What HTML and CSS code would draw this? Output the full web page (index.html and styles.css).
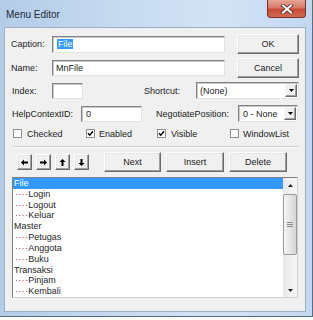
FILE: index.html
```html
<!DOCTYPE html>
<html>
<head>
<meta charset="utf-8">
<link rel="stylesheet" href="styles.css">
</head>
<body>
<div class="window">
  <div class="titlebar">
    <span class="title">Menu Editor</span>
    <div class="close">
      <svg width="14" height="10" viewBox="0 0 14 10"><path d="M3 1.5 L11 8.5 M11 1.5 L3 8.5" stroke="#4a3030" stroke-width="3.6" stroke-linecap="square"/><path d="M3 1.5 L11 8.5 M11 1.5 L3 8.5" stroke="#ffffff" stroke-width="2" stroke-linecap="square"/></svg>
    </div>
  </div>
  <div class="client">
    <div class="row r1">
      <span class="lbl l-cap">Caption:</span>
      <div class="tb tb-cap"><span class="sel">File</span></div>
      <div class="btn b-ok">OK</div>
    </div>
    <div class="row r2">
      <span class="lbl l-cap">Name:</span>
      <div class="tb tb-cap"><span class="txt">MnFile</span></div>
      <div class="btn b-ok">Cancel</div>
    </div>
    <div class="row r3">
      <span class="lbl l-idx">Index:</span>
      <div class="tb tb-idx"></div>
      <span class="lbl l-short">Shortcut:</span>
      <div class="combo cb-short"><span class="cb-text">(None)</span><span class="dd"><svg width="5" height="3" viewBox="0 0 5 3"><path d="M0 0 H5 L2.5 3 Z" fill="#000"/></svg></span></div>
    </div>
    <div class="row r4">
      <span class="lbl l-help">HelpContextID:</span>
      <div class="tb tb-help"><span class="txt">0</span></div>
      <span class="lbl l-neg">NegotiatePosition:</span>
      <div class="combo cb-neg"><span class="cb-text">0 - None</span><span class="dd"><svg width="5" height="3" viewBox="0 0 5 3"><path d="M0 0 H5 L2.5 3 Z" fill="#000"/></svg></span></div>
    </div>
    <div class="row r5">
      <div class="chk c1"><span class="box"></span><span>Checked</span></div>
      <div class="chk c2"><span class="box"><svg width="7" height="7" viewBox="0 0 7 7"><path d="M1 3.2 L2.8 5.2 L6 1.2" stroke="#000" stroke-width="1.4" fill="none"/></svg></span><span>Enabled</span></div>
      <div class="chk c3"><span class="box"><svg width="7" height="7" viewBox="0 0 7 7"><path d="M1 3.2 L2.8 5.2 L6 1.2" stroke="#000" stroke-width="1.4" fill="none"/></svg></span><span>Visible</span></div>
      <div class="chk c4"><span class="box"></span><span>WindowList</span></div>
    </div>
    <div class="sep"></div>
    <div class="row r6">
      <div class="btn arr"><svg width="7" height="7" viewBox="0 0 7 7"><path d="M0 3.5 L3 0.5 V2.5 H7 V4.5 H3 V6.5 Z" fill="#000"/></svg></div>
      <div class="btn arr"><svg width="7" height="7" viewBox="0 0 7 7"><path d="M7 3.5 L4 0.5 V2.5 H0 V4.5 H4 V6.5 Z" fill="#000"/></svg></div>
      <div class="btn arr"><svg width="7" height="7" viewBox="0 0 7 7"><path d="M3.5 0 L0.5 3 H2.5 V7 H4.5 V3 H6.5 Z" fill="#000"/></svg></div>
      <div class="btn arr"><svg width="7" height="7" viewBox="0 0 7 7"><path d="M3.5 7 L0.5 4 H2.5 V0 H4.5 V4 H6.5 Z" fill="#000"/></svg></div>
      <div class="btn b-next">Next</div>
      <div class="btn b-ins">Insert</div>
      <div class="btn b-ins">Delete</div>
    </div>
    <div class="listbox">
      <div class="items">
        <div class="item selected">File</div>
        <div class="item"><span class="dots">····</span>Login</div>
        <div class="item"><span class="dots">····</span>Logout</div>
        <div class="item"><span class="dots">····</span>Keluar</div>
        <div class="item">Master</div>
        <div class="item"><span class="dots">····</span>Petugas</div>
        <div class="item"><span class="dots">····</span>Anggota</div>
        <div class="item"><span class="dots">····</span>Buku</div>
        <div class="item">Transaksi</div>
        <div class="item"><span class="dots">····</span>Pinjam</div>
        <div class="item"><span class="dots">····</span>Kembali</div>
      </div>
      <div class="sb">
        <div class="sb-btn"><svg width="5" height="3" viewBox="0 0 5 3"><path d="M0 3 H5 L2.5 0 Z" fill="#222"/></svg></div>
        <div class="thumb"><span class="grip"></span><span class="grip"></span><span class="grip"></span></div>
        <div class="track"></div>
        <div class="sb-btn"><svg width="5" height="3" viewBox="0 0 5 3"><path d="M0 0 H5 L2.5 3 Z" fill="#222"/></svg></div>
      </div>
    </div>
  </div>
</div>
</body>
</html>
```
FILE: styles.css
```css
* { box-sizing: border-box; }
html, body { margin: 0; padding: 0; background: #ffffff; }
body {
  width: 313px; height: 320px; overflow: hidden;
  font-family: "Liberation Sans", Arial, sans-serif;
  font-size: 9px; color: #1b1b1b;
}
.window {
  width: 313px; height: 317px;
  background: linear-gradient(to right, #b3cce8 0%, #c5d9f0 35%, #d3e3f5 70%, #c3d8ef 100%);
  border-right: 1px solid #5d6c7f;
  border-bottom: 1px solid #5d6c7f;
  display: flex; flex-direction: column;
  padding: 0 6px 4px 4px;
}
.titlebar {
  height: 27px; flex: none;
  display: flex; justify-content: space-between; align-items: flex-start;
}
.title {
  margin: 9px 0 0 2px; line-height: 12px; font-size: 10px; color: #1e2a38;
}
.close {
  width: 39px; height: 18px;
  border: 1px solid #7a2f2a; border-top: none;
  border-radius: 0 0 4px 4px;
  background: linear-gradient(to bottom, #e7a696 0%, #d97a68 45%, #c84a36 55%, #cf6a52 100%);
  display: flex; align-items: center; justify-content: center;
}
.client {
  flex: 1;
  background: #f0f0f0;
  box-shadow: inset 0 0 0 1px #9aaec6;
  display: flex; flex-direction: column;
}
.row { display: flex; align-items: center; flex: none; }
.r1 { margin-top: 7px; height: 20px; padding-left: 7px; }
.r2 { margin-top: 4px; height: 20px; padding-left: 7px; }
.r3 { margin-top: 4px; height: 17px; padding-left: 8px; }
.r4 { margin-top: 6px; height: 17px; padding-left: 8px; }
.r5 { margin-top: 7px; height: 9px; padding-left: 9px; }
.r6 { margin-top: 4px; height: 20px; padding-left: 13px; }

.lbl { flex: none; white-space: nowrap; }
.l-cap { width: 41px; }
.l-idx { width: 40px; }
.l-short { width: 52px; margin-left: 61px; }
.l-help { width: 69px; }
.l-neg { width: 82px; margin-left: 14px; }

.tb {
  background: #fff; flex: none;
  border: 1px solid; border-color: #828282 #e3e3e3 #e3e3e3 #828282;
  box-shadow: inset 1px 1px 0 #c9c9c9;
  display: flex; align-items: center;
  padding-left: 3px;
}
.tb-cap { width: 173px; height: 16px; }
.r1 .tb-cap { height: 17px; }
.tb-idx { width: 31px; height: 16px; }
.tb-help { width: 61px; height: 16px; padding-left: 4px; }
.sel { background: #3399ff; color: #fff; line-height: 10px; padding: 0 0 0 1px; margin-left: 1px; }
.txt { line-height: 10px; }

.btn {
  flex: none;
  background: #f0f0f0;
  border: 1px solid; border-color: #ffffff #696969 #696969 #ffffff;
  box-shadow: inset -1px -1px 0 #a0a0a0, inset 1px 1px 0 #e6e6e6;
  display: flex; align-items: center; justify-content: center;
  color: #1b1b1b;
}
.b-ok { width: 62px; height: 20px; margin-left: 12px; }
.b-next { width: 57px; height: 20px; margin-left: 15px; }
.b-ins { width: 58px; height: 20px; margin-left: 5px; }
.arr { width: 15px; height: 16px; margin-right: 4px; }
.arr:nth-child(4) { margin-right: 0; }

.combo {
  flex: none; display: flex; align-items: stretch;
  background: #fff;
  border: 1px solid; border-color: #828282 #e3e3e3 #e3e3e3 #828282;
  box-shadow: inset 1px 1px 0 #c9c9c9;
  padding: 1px;
}
.cb-short { width: 103px; height: 17px; }
.cb-neg { width: 60px; height: 17px; }
.cb-text { flex: 1; display: flex; align-items: center; padding-left: 2px; white-space: nowrap; }
.cb-neg .cb-text { padding-left: 3px; }
.dd {
  width: 12px; flex: none;
  background: #f0f0f0;
  border: 1px solid; border-color: #f8f8f8 #696969 #696969 #f8f8f8;
  box-shadow: inset -1px -1px 0 #a0a0a0;
  display: flex; align-items: center; justify-content: center;
}

.chk { display: flex; align-items: center; flex: none; white-space: nowrap; }
.c1 { width: 73px; }
.c2 { width: 71px; }
.c3 { width: 73px; }
.box {
  width: 9px; height: 9px; flex: none; margin-right: 5px;
  background: #fff;
  border: 1px solid #8e8f8f;
  display: flex; align-items: center; justify-content: center;
}
.c2 .box, .c4 .box { margin-right: 4px; }

.sep {
  flex: none; margin: 8px 0 0 9px; width: 285px; height: 2px;
  border-top: 1px solid #c9c9c9; border-bottom: 1px solid #ffffff;
}

.listbox {
  flex: none; margin: 5px 0 0 8px; width: 286px; height: 121px;
  background: #fff;
  border: 1px solid; border-color: #7f7f7f #cfcfcf #cfcfcf #7f7f7f;
  display: flex;
}
.items { flex: 1; overflow: hidden; }
.item {
  height: 10.83px; line-height: 10.83px; padding-left: 1px;
  white-space: nowrap; color: #1e1e1e;
}
.item.selected { background: #3399ff; color: #fff; }
.dots { color: #a0283a; padding-left: 1px; letter-spacing: 0.3px; }

.sb {
  width: 14px; flex: none; display: flex; flex-direction: column;
  background: linear-gradient(to right, #e9e9e9, #f6f6f6);
}
.sb-btn { height: 14px; flex: none; display: flex; align-items: center; justify-content: center; }
.thumb {
  height: 61px; flex: none; margin: 2px 0 0 0;
  border: 1px solid #9a9a9a; border-radius: 2px;
  background: linear-gradient(to right, #f5f5f5, #e2e2e2 60%, #d6d6d6);
  display: flex; flex-direction: column; align-items: center; justify-content: center; gap: 1px;
}
.grip { width: 6px; height: 1px; background: #8a8a8a; }
.track { flex: 1; }
```
